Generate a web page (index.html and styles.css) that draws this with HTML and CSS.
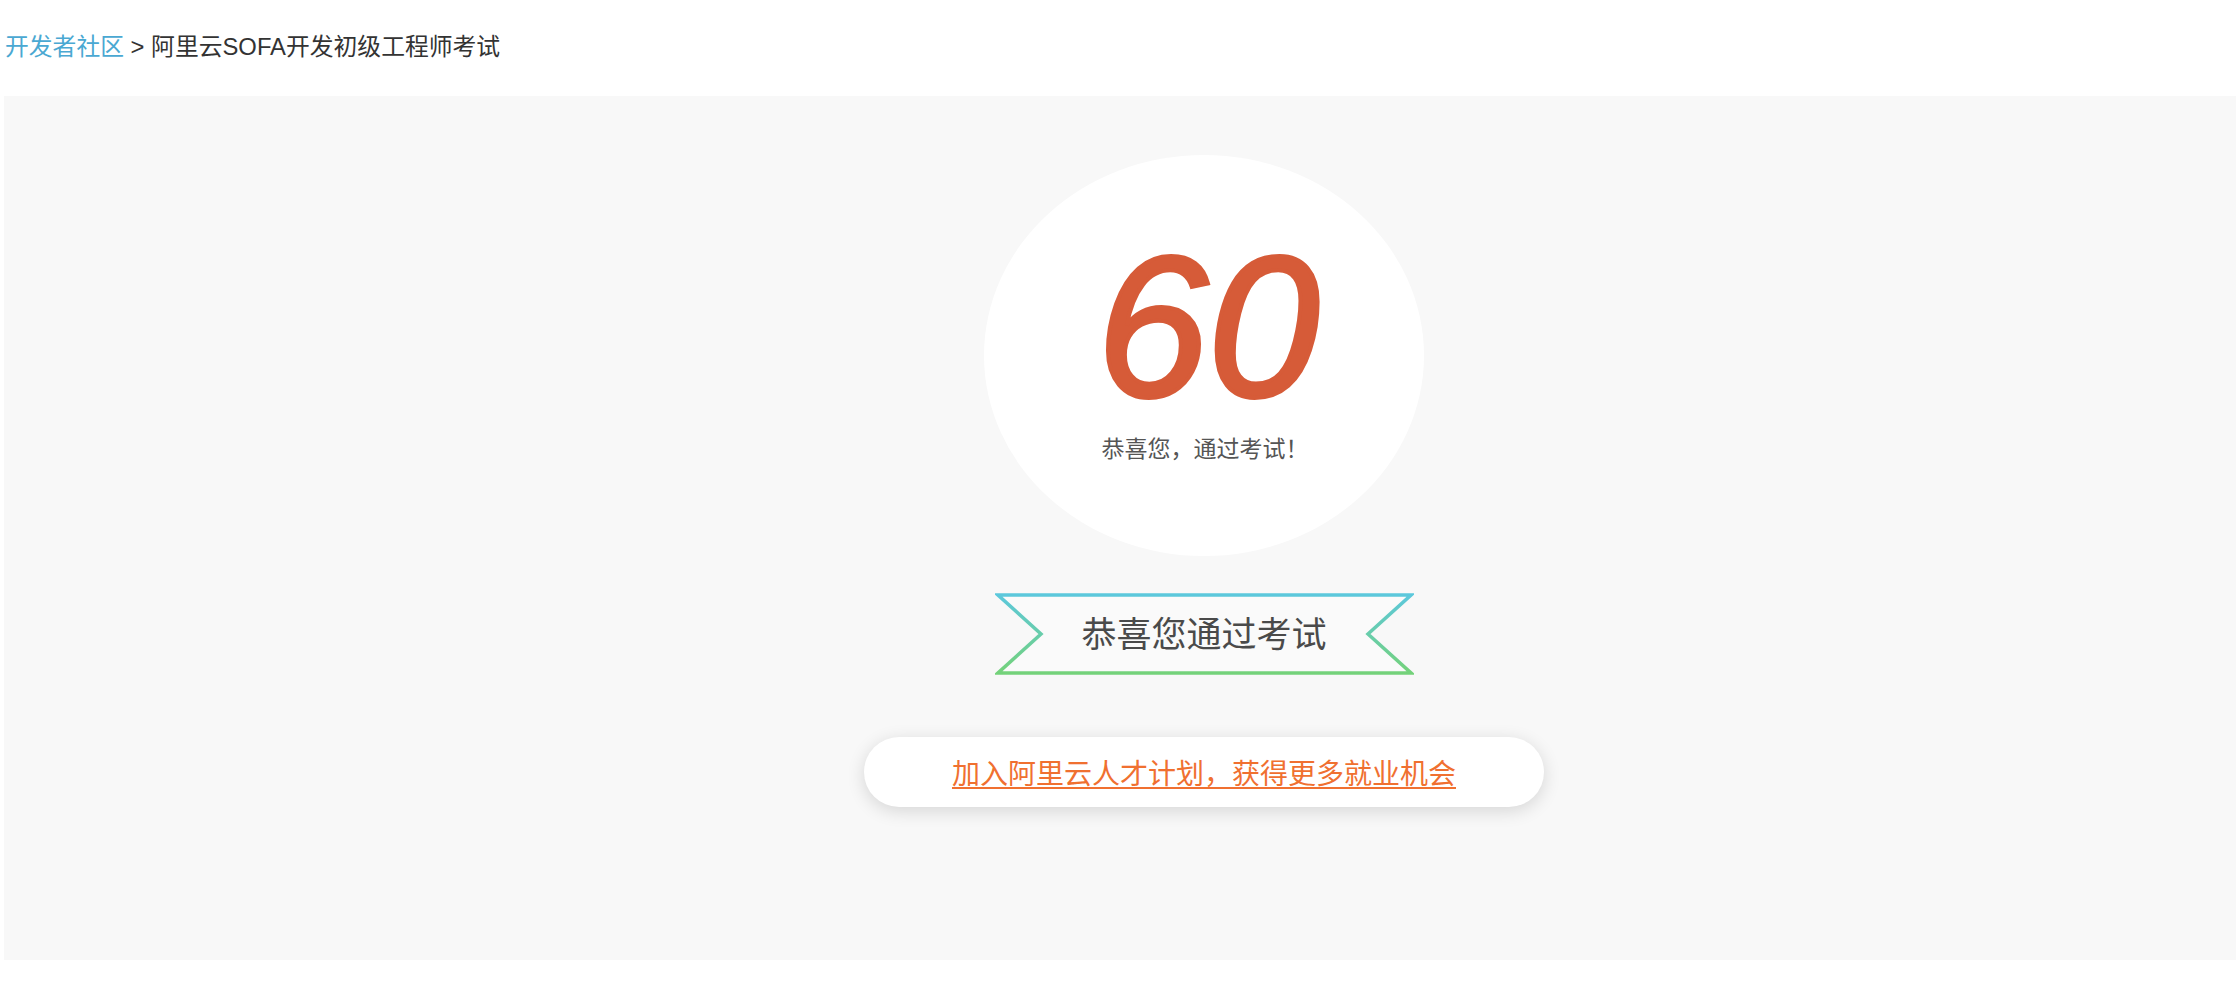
FILE: index.html
```html
<!DOCTYPE html>
<html lang="zh-CN">
<head>
<meta charset="utf-8">
<title>阿里云SOFA开发初级工程师考试</title>
<link rel="stylesheet" href="styles.css">
</head>
<body>
<div class="page">
  <div class="crumbs">
    <a class="crumb-link" href="#">开发者社区</a><span class="crumb-sep"> &gt; </span><span class="crumb-cur">阿里云SOFA开发初级工程师考试</span>
  </div>
  <div class="panel">
    <div class="result">
      <div class="score-circle">
        <div class="score">60</div>
        <div class="score-msg">恭喜您，通过考试！</div>
      </div>
      <div class="ribbon">
        <svg class="ribbon-svg" width="419" height="82" viewBox="0 0 419 82">
          <defs>
            <linearGradient id="rg" x1="0" y1="0" x2="0" y2="1">
              <stop offset="0" stop-color="#5cc8dc"/>
              <stop offset="1" stop-color="#74d27a"/>
            </linearGradient>
          </defs>
          <polygon points="3,2 416,2 373,41 416,80 3,80 46,41" fill="#fafafa" stroke="url(#rg)" stroke-width="3.5" stroke-linejoin="miter"/>
        </svg>
        <span class="ribbon-text">恭喜您通过考试</span>
      </div>
      <div class="join-btn">
        <a class="join-link" href="#">加入阿里云人才计划，获得更多就业机会</a>
      </div>
    </div>
  </div>
</div>
</body>
</html>
```
FILE: styles.css
```css
html, body {
  margin: 0;
  padding: 0;
  background: #ffffff;
  overflow-x: hidden;
}
.page {
  padding-left: 4px;
  font-family: "Liberation Sans", "Noto Sans CJK SC", sans-serif;
}
.crumbs {
  height: 96px;
  display: flex;
  align-items: center;
  padding-left: 1px;
  font-size: 23.8px;
  line-height: 1;
  color: #333333;
  box-sizing: border-box;
  padding-bottom: 2px;
}
.crumb-link {
  color: #4aa8d2;
  text-decoration: none;
}
.crumb-sep {
  white-space: pre;
  color: #333;
}
.panel {
  background: #f8f8f8;
  height: 864px;
  box-sizing: border-box;
  padding-top: 59px;
  padding-left: 168px;
}
.result {
  display: flex;
  flex-direction: column;
  align-items: center;
}
.score-circle {
  width: 440px;
  height: 401px;
  border-radius: 50%;
  background: #ffffff;
  display: flex;
  flex-direction: column;
  align-items: center;
  box-sizing: border-box;
  padding-top: 72px;
}
.score {
  font-family: "Liberation Sans", sans-serif;
  font-style: italic;
  font-size: 200px;
  line-height: 1;
  height: 190px;
  color: #d65b38;
  -webkit-text-stroke: 4px #d65b38;
  padding-left: 8px;
}
.score-msg {
  margin-top: 19px;
  font-family: "Noto Sans CJK SC", sans-serif;
  font-size: 23px;
  line-height: 1;
  color: #555555;
  padding-left: 2px;
}
.ribbon {
  margin-top: 37px;
  width: 419px;
  height: 82px;
  position: relative;
  display: flex;
  align-items: center;
  justify-content: center;
}
.ribbon-svg {
  position: absolute;
  left: 0;
  top: 0;
}
.ribbon-text {
  position: relative;
  font-family: "Noto Sans CJK SC", sans-serif;
  font-size: 35px;
  line-height: 1;
  color: #4a4a4a;
  margin-top: -6px;
}
.join-btn {
  margin-top: 62px;
  width: 680px;
  height: 70px;
  border-radius: 35px;
  background: #ffffff;
  box-shadow: 0 4px 18px rgba(0, 0, 0, 0.14);
  display: flex;
  align-items: center;
  justify-content: center;
}
.join-link {
  font-family: "Noto Sans CJK SC", sans-serif;
  font-size: 28px;
  line-height: 1;
  color: #f07030;
  text-decoration: underline;
  text-underline-offset: 3px;
  text-decoration-thickness: 2px;
}
```
